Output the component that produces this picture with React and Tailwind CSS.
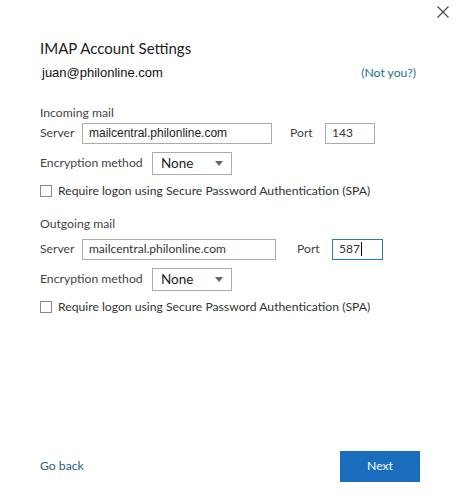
import React from 'react';

const ui = { fontFamily: 'Lato, "Noto Sans", sans-serif' };
const arial = { fontFamily: '"Liberation Sans", Arial, sans-serif' };

function Field({ value, width, focused, small }) {
    return (
        <div
            className={`h-[21px] flex items-center px-[6px] bg-white border ${focused ? 'border-[#2b7bb9]' : 'border-[#ababab]'} ${width}`}
        >
            <span className={small ? 'text-[12px] text-[#222]' : 'text-[12px] text-[#333]'} style={small ? arial : ui}>
                {value}
            </span>
            {focused && <span className="w-px h-[14px] bg-black ml-[1px]" />}
        </div>
    );
}

function Select() {
    return (
        <div className="w-[80px] h-[23px] border border-[#ababab] flex items-center justify-between pl-[8px] pr-[8px]">
            <span className="text-[13.5px] text-[#222]" style={ui}>None</span>
            <svg width="8" height="5" viewBox="0 0 8 5"><path d="M0 0h8L4 5z" fill="#666" /></svg>
        </div>
    );
}

function Section({ title, server, serverWidth, serverSmall, portGap, port, portFocused, top, rowGap }) {
    return (
        <div className={top}>
            <div className="text-[12.2px] text-[#444] leading-[18px]" style={ui}>{title}</div>
            <div className={`flex items-center ${rowGap}`}>
                <span className="w-[42px] text-[12.2px] text-[#444]" style={ui}>Server</span>
                <Field value={server} width={serverWidth} small={serverSmall} />
                <span className={`${portGap} text-[12.2px] text-[#444] w-[35px]`} style={ui}>Port</span>
                <Field value={port} width={portFocused ? 'w-[51px]' : 'w-[50px]'} focused={portFocused} />
            </div>
            <div className="flex items-center mt-[8px]">
                <span className="w-[112px] whitespace-nowrap text-[12.2px] text-[#444]" style={ui}>Encryption method</span>
                <Select />
            </div>
            <label className="flex items-center mt-[7px]">
                <span className="w-[12px] h-[12px] border border-[#8a8a8a] bg-white" />
                <span className="ml-[6px] whitespace-nowrap text-[12.2px] text-[#333]" style={ui}>Require logon using Secure Password Authentication (SPA)</span>
            </label>
        </div>
    );
}

export default function App() {
    return (
        <div className="w-[458px] h-[499px] bg-white flex flex-col">
            {/* Close */}
            <div className="flex justify-end pt-[6px] pr-[9px]">
                <svg width="12" height="12" viewBox="0 0 12 12">
                    <path d="M0.5 0.5L11.5 11.5M11.5 0.5L0.5 11.5" stroke="#444" strokeWidth="1.1" />
                </svg>
            </div>

            <div className="px-[40px] flex flex-col flex-1">
                <h1 className="mt-[20px] text-[15px] leading-[20px] text-[#222]" style={ui}>IMAP Account Settings</h1>
                <div className="flex items-center justify-between mt-[5px] pl-[2px] pr-[2px]">
                    <span className="text-[13px] text-[#111]" style={arial}>juan@philonline.com</span>
                    <a href="#" className="text-[12.2px] text-[#22708f]" style={ui}>(Not you?)</a>
                </div>

                <Section
                    top="mt-[21px]"
                    rowGap="mt-[1px]"
                    title="Incoming mail"
                    server="mailcentral.philonline.com"
                    serverWidth="w-[190px]"
                    serverSmall
                    portGap="ml-[18px]"
                    port="143"
                />
                <Section
                    top="mt-[15px]"
                    rowGap="mt-[6px]"
                    title="Outgoing mail"
                    server="mailcentral.philonline.com"
                    serverWidth="w-[194px]"
                    portGap="ml-[21px]"
                    port="587"
                    portFocused
                />

                <div className="mt-auto mb-[17px] flex items-center justify-between">
                    <a href="#" className="text-[12.2px] text-[#1f5f80]" style={ui}>Go back</a>
                    <button className="w-[80px] h-[31px] bg-[#1a6cbc] text-white text-[12.2px] mr-[-2px]" style={ui}>Next</button>
                </div>
            </div>
        </div>
    );
}
